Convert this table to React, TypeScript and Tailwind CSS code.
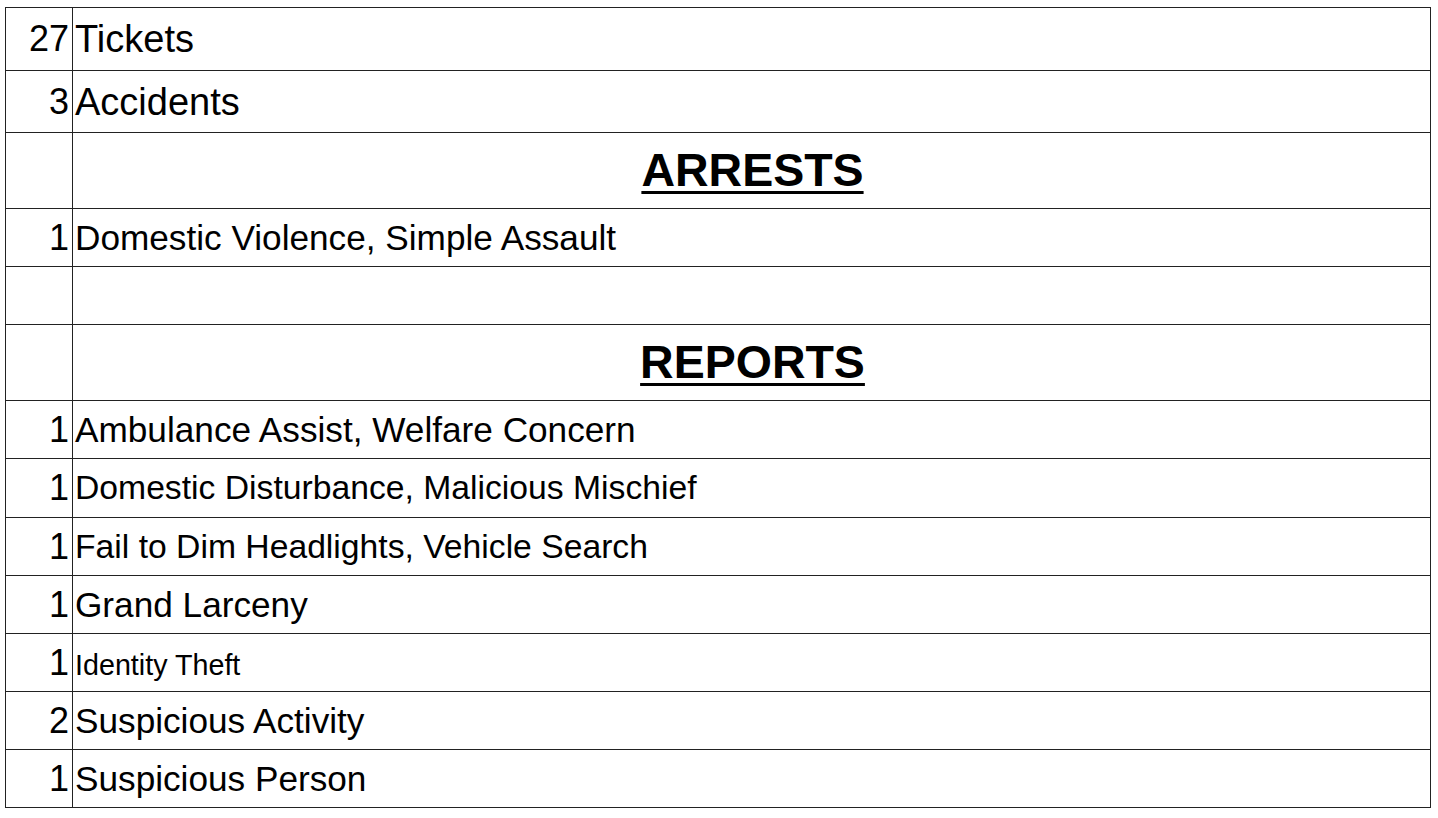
import React from "react";

type Row =
  | { kind: "item"; n: string; label: string; h: string; fs: string; extra?: string }
  | { kind: "header"; label: string; h: string }
  | { kind: "blank"; h: string };

const rows: Row[] = [
  { kind: "item", n: "27", label: "Tickets", h: "h-[63px]", fs: "text-[38px]" },
  { kind: "item", n: "3", label: "Accidents", h: "h-[62px]", fs: "text-[38px]" },
  { kind: "header", label: "ARRESTS", h: "h-[76px]" },
  { kind: "item", n: "1", label: "Domestic Violence, Simple Assault", h: "h-[58px]", fs: "text-[35.2px]" },
  { kind: "blank", h: "h-[58px]" },
  { kind: "header", label: "REPORTS", h: "h-[76px]" },
  { kind: "item", n: "1", label: "Ambulance Assist, Welfare Concern", h: "h-[58px]", fs: "text-[35.2px]" },
  { kind: "item", n: "1", label: "Domestic Disturbance, Malicious Mischief", h: "h-[59px]", fs: "text-[33.7px]" },
  { kind: "item", n: "1", label: "Fail to Dim Headlights, Vehicle Search", h: "h-[58px]", fs: "text-[33.7px]" },
  { kind: "item", n: "1", label: "Grand Larceny", h: "h-[58px]", fs: "text-[35.2px]" },
  { kind: "item", n: "1", label: "Identity Theft", h: "h-[58px]", fs: "text-[28.7px]", extra: "pt-[6px]" },
  { kind: "item", n: "2", label: "Suspicious Activity", h: "h-[58px]", fs: "text-[35.2px]" },
  { kind: "item", n: "1", label: "Suspicious Person", h: "h-[58px]", fs: "text-[35.2px]" },
];

export default function App() {
  return (
    <div
      className="min-h-[818px] w-full bg-white pl-[5px] pt-[7px] text-black"
      style={{ fontFamily: '"Liberation Sans", Arial, Helvetica, sans-serif' }}
    >
      <div className="flex w-[1426px] flex-col border-l border-t border-[#222]">
        {rows.map((r, i) => (
          <div key={i} className={`flex ${r.h}`}>
            <div className="flex w-[67px] shrink-0 items-center justify-end border-b border-r border-[#222] pr-[3px] text-[36px] leading-none">
              {r.kind === "item" ? r.n : ""}
            </div>
            <div
              className={`flex flex-1 items-center border-b border-r border-[#222] pl-[2px] ${
                r.kind === "header" ? "justify-center" : ""
              }`}
            >
              {r.kind === "item" && (
                <span className={`${r.fs} ${r.extra ?? ""} leading-none`}>{r.label}</span>
              )}
              {r.kind === "header" && (
                <span className="text-[46.5px] font-bold leading-none underline decoration-[3px] underline-offset-[5px]">
                  {r.label}
                </span>
              )}
            </div>
          </div>
        ))}
      </div>
    </div>
  );
}
